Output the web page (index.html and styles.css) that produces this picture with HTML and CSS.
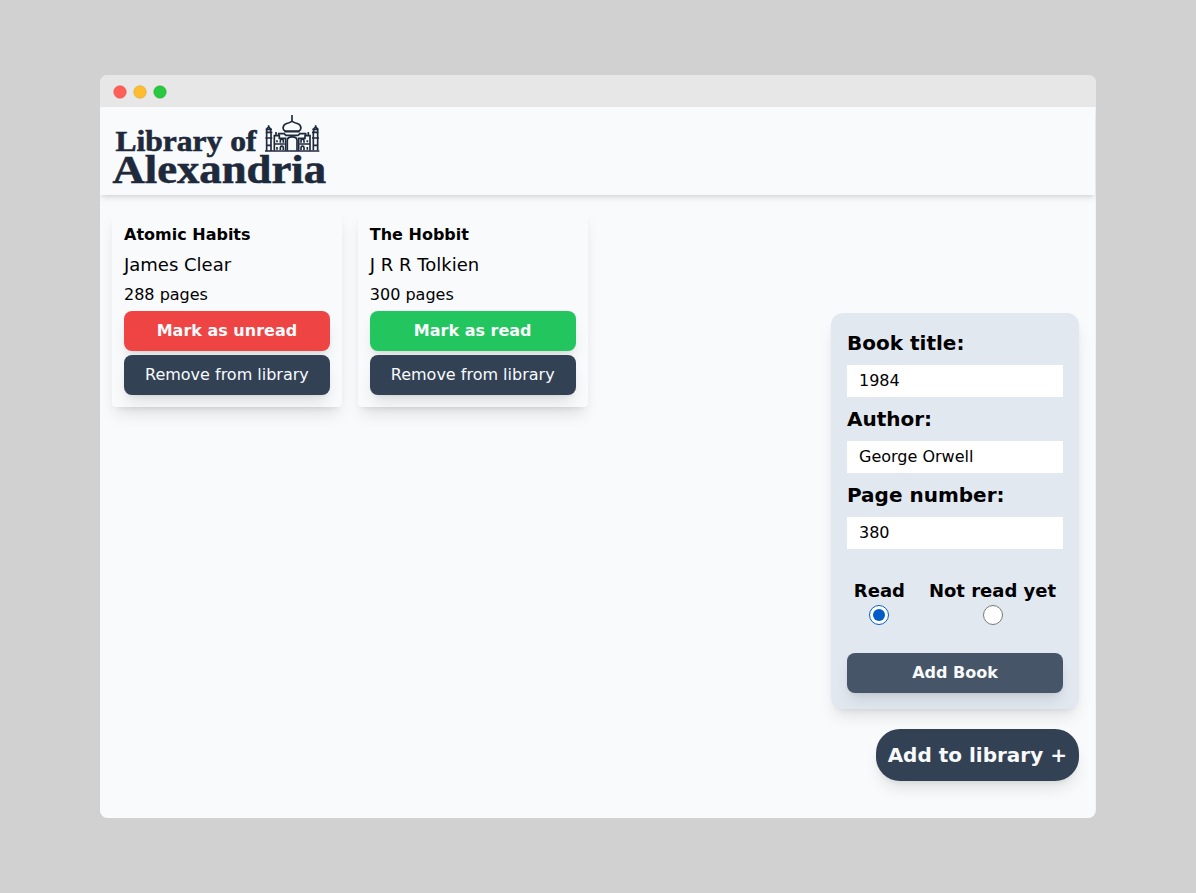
FILE: index.html
```html
<!DOCTYPE html>
<html lang="en">
<head>
<meta charset="utf-8">
<title>Library of Alexandria</title>
<link rel="stylesheet" href="styles.css">
</head>
<body>
<div class="window">
  <div class="titlebar">
    <svg class="dots" width="56" height="14" viewBox="0 0 56 14" aria-hidden="true">
      <circle class="dot-close" cx="8" cy="7" r="6.2"/>
      <circle class="dot-min" cx="28" cy="7" r="6.2"/>
      <circle class="dot-max" cx="48" cy="7" r="6.2"/>
    </svg>
  </div>
  <div class="page">
    <header class="header">
      <svg class="logo" width="216" height="72" viewBox="0 0 216 72" role="img" aria-label="Library of Alexandria">
        <g class="logo-text">
          <text x="3.5" y="36" font-size="30" textLength="141" lengthAdjust="spacingAndGlyphs">Library of</text>
          <text x="0.5" y="67.7" font-size="41" textLength="213.5" lengthAdjust="spacingAndGlyphs">Alexandria</text>
        </g>
        <g transform="translate(146 -5) scale(.33333)" class="logo-art">
          <path d="M102 15V35M81 63C70 55 76 41 91 39Q99 37 102 33Q105 37 113 39C128 41 134 55 123 63ZM79 65H125M60 71H78L84 76H120L126 71H144"/>
          <path d="M21 123H184M26 67V121M39 67V121M23 67H43M22 84H43M24 106H41M26 66V57L32 50L38 57V66M23 58H42M32 46V52"/>
          <path d="M166 67V121M179 67V121M162 67H182M162 84H183M164 106H181M167 66V57L173 50L179 57V66M163 58H182M173 46V52"/>
          <path d="M49 122V77H64V85H83V122M156 122V77H141V85H122V122M54 77V66M62 77V69M151 77V66M143 77V69M51 102H80M125 102H154"/>
          <path d="M88 122V91C88 77 117 77 117 91V122M67 98V92C67 86 76 86 76 92V98M67 120V113C67 107 76 107 76 113V120M129 98V92C129 86 138 86 138 92V98M129 120V113C129 107 138 107 138 113V120M57 91V97M57 111V119M148 91V97M148 111V119"/>
        </g>
      </svg>
    </header>
    <main class="main">
      <section class="books">
        <article class="card">
          <h2 class="card-title">Atomic Habits</h2>
          <p class="card-author">James Clear</p>
          <p class="card-pages">288 pages</p>
          <button class="btn btn-unread">Mark as unread</button>
          <button class="btn btn-remove">Remove from library</button>
        </article>
        <article class="card">
          <h2 class="card-title">The Hobbit</h2>
          <p class="card-author">J R R Tolkien</p>
          <p class="card-pages">300 pages</p>
          <button class="btn btn-read">Mark as read</button>
          <button class="btn btn-remove">Remove from library</button>
        </article>
      </section>
      <aside class="side">
        <form class="form">
          <label class="label" for="title">Book title:</label>
          <input class="input" id="title" type="text" value="1984">
          <label class="label" for="author">Author:</label>
          <input class="input" id="author" type="text" value="George Orwell">
          <label class="label" for="pages">Page number:</label>
          <input class="input" id="pages" type="text" value="380">
          <div class="choices">
            <label class="choice">Read<input class="radio" type="radio" name="status" checked></label>
            <label class="choice">Not read yet<input class="radio" type="radio" name="status"></label>
          </div>
          <button class="btn btn-add" type="button">Add Book</button>
        </form>
        <button class="open-form">Add to library +</button>
      </aside>
    </main>
  </div>
</div>
</body>
</html>
```

FILE: styles.css
```css
* {
  box-sizing: border-box;
  margin: 0;
}

body {
  min-height: 100vh;
  padding: 75px 100px;
  background: #d1d1d1;
  color: #000;
  font: 16px/24px "DejaVu Sans", sans-serif;
}

.window {
  display: flex;
  flex-direction: column;
  height: 743px;
  border-radius: 8px;
  background: #f1f3f4;
  overflow: hidden;
}

.titlebar {
  display: flex;
  align-items: center;
  flex: 0 0 32px;
  padding: 2px 12px 0;
  background: #e7e7e7;
}

.dots {
  display: block;
  stroke-width: 0.6;
}

.dot-close { fill: #ff5f57; stroke: #e24b41; }
.dot-min { fill: #febc2e; stroke: #e1a325; }
.dot-max { fill: #28c840; stroke: #2dac2f; }

.page {
  display: flex;
  flex: 1;
  flex-direction: column;
  margin-right: 1px;
  border-bottom-right-radius: 7px;
  background: #f8fafc;
}

.header {
  flex: 0 0 88px;
  padding: 8px 12px;
  box-shadow: 0 4px 6px -1px rgba(0, 0, 0, 0.1), 0 2px 4px -2px rgba(0, 0, 0, 0.1);
}

.logo {
  display: block;
  overflow: visible;
}

.logo-text {
  fill: #1e293b;
  stroke: #1e293b;
  stroke-width: 0.6;
  font-family: "Liberation Serif", serif;
  font-weight: 700;
}

.logo-art {
  fill: none;
  stroke: #1e293b;
  stroke-width: 5;
}

.main {
  display: flex;
  flex: 1;
  justify-content: space-between;
  padding: 16px 16px 37px 12px;
}

.books {
  display: flex;
  align-items: flex-start;
  gap: 16px;
}

.card {
  display: flex;
  flex-direction: column;
  gap: 4px;
  width: 229.8px;
  padding: 12px;
  border-radius: 4px;
  box-shadow: 0 10px 15px -3px rgba(0, 0, 0, 0.1), 0 4px 6px -4px rgba(0, 0, 0, 0.1);
}

.card-title {
  font-size: 16px;
  line-height: 24px;
}

.card-author {
  font-size: 18px;
  line-height: 28px;
}

.btn {
  height: 40px;
  padding: 8px;
  border: 0;
  border-radius: 8px;
  color: #f8fafc;
  font: 700 16px/24px "DejaVu Sans", sans-serif;
  box-shadow: 0 10px 15px -3px rgba(0, 0, 0, 0.1), 0 4px 6px -4px rgba(0, 0, 0, 0.1);
}

.btn-unread { background: #ef4444; }
.btn-read { background: #22c55e; }

.btn-remove {
  background: #334155;
  font-weight: 400;
}

.btn-add {
  background: #475569;
}

.side {
  display: flex;
  flex-direction: column;
  align-items: flex-end;
  justify-content: flex-end;
  gap: 20px;
}

.form {
  display: flex;
  flex-direction: column;
  gap: 8px;
  width: 248px;
  padding: 16px;
  border-radius: 12px;
  background: #e2e8f0;
  box-shadow: 0 10px 15px -3px rgba(0, 0, 0, 0.1), 0 4px 6px -4px rgba(0, 0, 0, 0.1);
}

.label {
  font-size: 20px;
  font-weight: 700;
  line-height: 28px;
}

.input {
  width: 100%;
  height: 32px;
  padding: 3px 12px 5px;
  border: 0;
  background: #fff;
  color: #000;
  font: 16px/24px "DejaVu Sans", sans-serif;
}

.choices {
  display: flex;
  justify-content: center;
  gap: 24px;
  margin: 20px 0;
}

.choice {
  display: flex;
  flex-direction: column;
  align-items: center;
  font-size: 18px;
  font-weight: 700;
  line-height: 28px;
  white-space: nowrap;
}

.radio {
  width: 20px;
  height: 20px;
  margin: 0;
  accent-color: #005cc8;
}

.open-form {
  height: 52px;
  padding: 12px;
  border: 0;
  border-radius: 24px;
  background: #334155;
  color: #f8fafc;
  font: 700 20px/28px "DejaVu Sans", sans-serif;
  box-shadow: 0 10px 15px -3px rgba(0, 0, 0, 0.1), 0 4px 6px -4px rgba(0, 0, 0, 0.1);
}
```
